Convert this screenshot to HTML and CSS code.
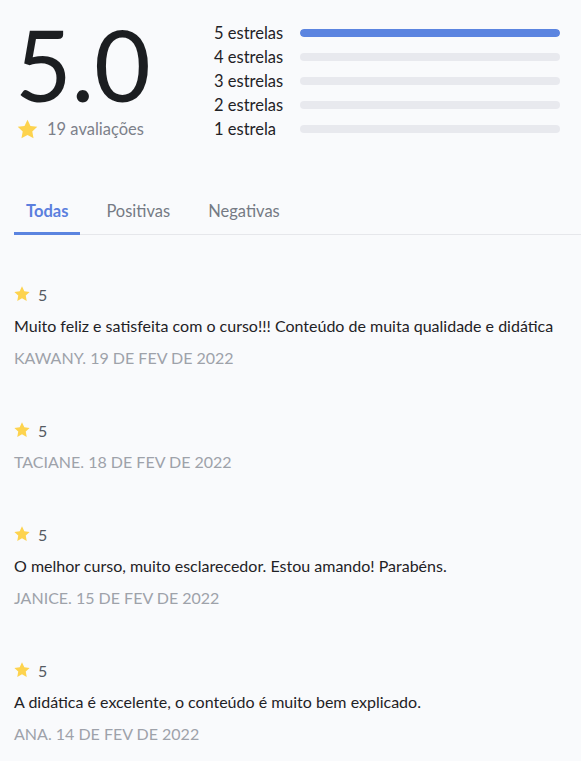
FILE: index.html
```html
<!DOCTYPE html>
<html lang="pt-BR">
<head>
<meta charset="utf-8">
<link rel="stylesheet" href="styles.css">
</head>
<body>
<div class="page">
  <section class="summary">
    <div class="score">
      <div class="score-value">5.0</div>
      <div class="score-count">
        <svg class="star-lg" viewBox="0 0 24 24"><path d="M12 1.8l3.1 6.5 7.1.9-5.2 4.9 1.3 7.1L12 17.8l-6.3 3.4 1.3-7.1L1.8 9.2l7.1-.9z"/></svg>
        <span>19 avaliações</span>
      </div>
    </div>
    <div class="bars">
      <div class="bar-row"><span class="bar-label">5 estrelas</span><div class="bar"><div class="bar-fill" style="width:100%"></div></div></div>
      <div class="bar-row"><span class="bar-label">4 estrelas</span><div class="bar"><div class="bar-fill" style="width:0%"></div></div></div>
      <div class="bar-row"><span class="bar-label">3 estrelas</span><div class="bar"><div class="bar-fill" style="width:0%"></div></div></div>
      <div class="bar-row"><span class="bar-label">2 estrelas</span><div class="bar"><div class="bar-fill" style="width:0%"></div></div></div>
      <div class="bar-row"><span class="bar-label">1 estrela</span><div class="bar"><div class="bar-fill" style="width:0%"></div></div></div>
    </div>
  </section>

  <nav class="tabs">
    <div class="tab active">Todas</div>
    <div class="tab">Positivas</div>
    <div class="tab">Negativas</div>
  </nav>

  <section class="reviews">
    <article class="review">
      <div class="review-rating"><svg class="star-sm" viewBox="0 0 24 24"><path d="M12 1.8l3.1 6.5 7.1.9-5.2 4.9 1.3 7.1L12 17.8l-6.3 3.4 1.3-7.1L1.8 9.2l7.1-.9z"/></svg><span>5</span></div>
      <p class="review-text">Muito feliz e satisfeita com o curso!!! Conteúdo de muita qualidade e didática</p>
      <div class="review-meta">KAWANY. 19 DE FEV DE 2022</div>
    </article>
    <article class="review">
      <div class="review-rating"><svg class="star-sm" viewBox="0 0 24 24"><path d="M12 1.8l3.1 6.5 7.1.9-5.2 4.9 1.3 7.1L12 17.8l-6.3 3.4 1.3-7.1L1.8 9.2l7.1-.9z"/></svg><span>5</span></div>
      <div class="review-meta">TACIANE. 18 DE FEV DE 2022</div>
    </article>
    <article class="review">
      <div class="review-rating"><svg class="star-sm" viewBox="0 0 24 24"><path d="M12 1.8l3.1 6.5 7.1.9-5.2 4.9 1.3 7.1L12 17.8l-6.3 3.4 1.3-7.1L1.8 9.2l7.1-.9z"/></svg><span>5</span></div>
      <p class="review-text">O melhor curso, muito esclarecedor. Estou amando! Parabéns.</p>
      <div class="review-meta">JANICE. 15 DE FEV DE 2022</div>
    </article>
    <article class="review">
      <div class="review-rating"><svg class="star-sm" viewBox="0 0 24 24"><path d="M12 1.8l3.1 6.5 7.1.9-5.2 4.9 1.3 7.1L12 17.8l-6.3 3.4 1.3-7.1L1.8 9.2l7.1-.9z"/></svg><span>5</span></div>
      <p class="review-text">A didática é excelente, o conteúdo é muito bem explicado.</p>
      <div class="review-meta">ANA. 14 DE FEV DE 2022</div>
    </article>
  </section>
</div>
</body>
</html>
```

FILE: styles.css
```css
html, body {
  margin: 0;
  padding: 0;
  background: #f9fafc;
}
body {
  font-family: "Lato", "Open Sans", sans-serif;
  color: #1f2226;
  overflow: hidden;
}
.page {
  padding: 0 0 0 14px;
}
.summary {
  display: flex;
  padding: 19px 21px 0 4px;
}
.score {
  width: 196px;
  display: flex;
  flex-direction: column;
}
.score-value {
  font-size: 98px;
  line-height: 90px;
  height: 90px;
  color: #1c1e21;
  font-weight: 400;
  margin-left: -3px;
  letter-spacing: -0.5px;
}
.score-count {
  display: flex;
  align-items: center;
  gap: 8px;
  margin-top: 9px;
  height: 22px;
  font-size: 16.5px;
  color: #7c808a;
}
.star-lg {
  width: 23px;
  height: 23px;
  fill: #fdd34e;
  margin-left: -2px;
}
.bars {
  flex: 1;
  display: flex;
  flex-direction: column;
  padding-top: 2px;
}
.bar-row {
  display: flex;
  align-items: center;
  height: 24px;
}
.bar-label {
  width: 86px;
  font-size: 16.5px;
  color: #1f2226;
}
.bar {
  flex: 1;
  height: 8px;
  border-radius: 4px;
  background: #e8e9ee;
  overflow: hidden;
}
.bar-fill {
  height: 100%;
  background: #5b84e0;
  border-radius: 4px;
}
.tabs {
  display: flex;
  margin-top: 48px;
  border-bottom: 1px solid #e6e7eb;
}
.tab {
  font-size: 16.5px;
  line-height: 20px;
  color: #757a84;
  padding: 12px 12px 11px;
  margin-right: 14px;
  border-bottom: 3px solid transparent;
  margin-bottom: -1px;
}
.tab.active {
  color: #5b7fde;
  font-weight: 700;
  border-bottom-color: #5b84e0;
}
.reviews {
  padding-top: 43px;
}
.review {
  margin-bottom: 40px;
}
.review-rating {
  display: flex;
  align-items: center;
  gap: 7px;
  height: 32px;
  font-size: 16px;
  color: #555a63;
  margin-left: -1px;
}
.star-sm {
  width: 18px;
  height: 18px;
  fill: #fdd34e;
}
.review-text {
  margin: 0;
  height: 32px;
  line-height: 32px;
  font-size: 16px;
  color: #1f2226;
}
.review-meta {
  height: 32px;
  line-height: 32px;
  font-size: 16px;
  color: #9ea2aa;
}
```
